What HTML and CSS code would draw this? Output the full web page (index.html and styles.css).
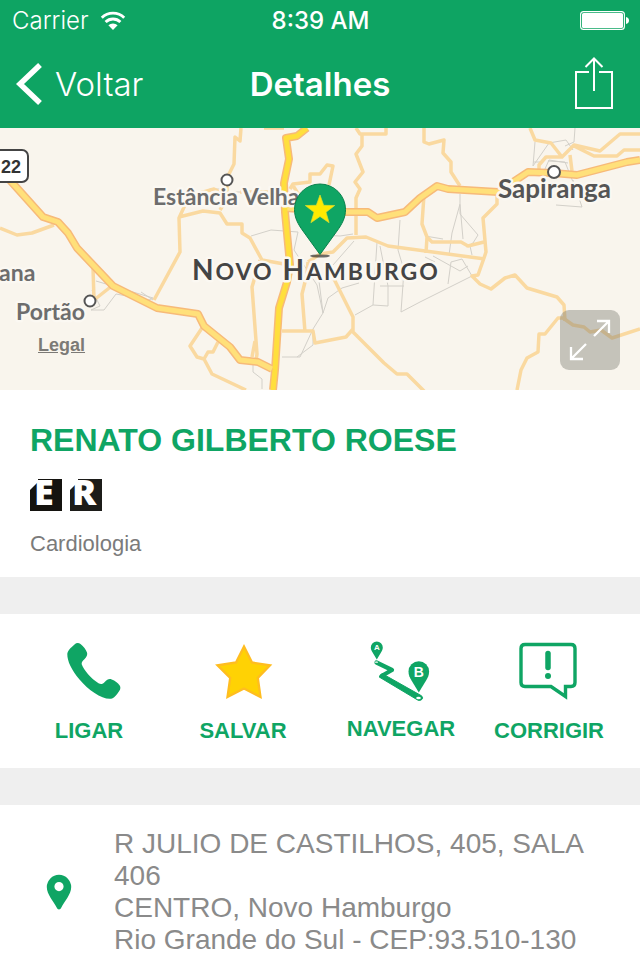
FILE: index.html
```html
<!DOCTYPE html>
<html lang="pt-BR">
<head>
<meta charset="utf-8">
<meta name="viewport" content="width=device-width, initial-scale=1">
<title>Detalhes</title>
<link rel="stylesheet" href="styles.css">
</head>
<body>
<header class="top">
  <div class="status">
    <div class="carrier">
      <span>Carrier</span>
      <svg class="wifi" viewBox="0 0 26 20" aria-hidden="true">
        <path d="M1.8 6.7a16 16 0 0 1 22.4 0M5.6 11a10.6 10.6 0 0 1 14.8 0" fill="none" stroke="#fff" stroke-width="2.9"/>
        <path d="M8.4 14.2a6.8 6.8 0 0 1 9.2 0L13 19z" fill="#fff"/>
      </svg>
    </div>
    <span class="clock">8:39 AM</span>
    <svg class="battery" viewBox="0 0 49 20" aria-hidden="true">
      <rect x=".6" y=".6" width="43.8" height="17.8" rx="3" fill="none" stroke="#fff" stroke-width="1.1"/>
      <rect x="2" y="2" width="41" height="15" rx="1.6" fill="#fff"/>
      <path d="M46 6c2 .3 3 1.700 3 3.500s-1 3.200-3 3.500z" fill="#fff"/>
    </svg>
  </div>
  <nav class="bar">
    <button class="back" type="button">
      <svg viewBox="0 0 26 42" aria-hidden="true"><path d="M24 2 4 21l20 19" fill="none" stroke="#fff" stroke-width="5.500"/></svg>
      <span>Voltar</span>
    </button>
    <h1>Detalhes</h1>
    <button class="share" type="button" aria-label="Compartilhar">
      <svg viewBox="0 0 40 54" aria-hidden="true"><path d="M15 15H2v36h36V15H25M20 34V1.500M11.500 10 20 1.500 28.500 10" fill="none" stroke="#fff" stroke-width="2"/></svg>
    </button>
  </nav>
</header>
<main>
  <section class="map" aria-label="Mapa">
    <svg class="map-art" viewBox="0 128 640 262" preserveAspectRatio="xMidYMid slice">
      <rect y="128" width="640" height="262" fill="#f9f5ed"/>
      <g class="trail">
        <path d="M96 281l57 17-4 2-33-6-12 16H91l9-4-8-16M141 292l12 8"/>
        <path d="M200 195l10-6h14M224 192h20M251 236l20-6 27 2-4 18 23 35 6 28-10 16-13 28h-18"/>
        <path d="M253 362v10l9 7v10M297 357l16-12v-11M323 313l-5-40M323 313l5-15 14-10 17-5M333 265l21-24M355 315l18-10M373 305l4-63M373 305l15 1V286l-8-40M380 286h24M400 220l-2 30 6 20-3 42 19-10"/>
        <path d="M318 235l22 1 13-2M420 302l52-26-10-17-11 3-3 22M433 256l27 15 8-5M425 257l10 5M460 194v20l18 21-5 8-7 4M460 204l-8 29-3 22M460 205l3 34M470 246l2 9M425 236l18 3"/>
        <path d="M535 142l-2 24 16-23 17-3 7 10M575 128l-1 14-9 4M548 161l17 1 8 20M556 205l26 2-9-27M533 162h8M545 169l4-9 19 3"/>
      </g>
      <g class="minor">
        <path d="M0 228l17 7 15-2 22-8M93 268l1 32 19-15M154 300l26-48-1-34 6-13M179 217l24-6 17 2 7 11h15v9l8 5 12 22 22 4"/>
        <path d="M241 128l-1 13-5-4-1 27-7 14v18M200 193l14-4 10 5M240 192h45M264 128h20M220 210l8-13"/>
        <path d="M260 260l-8 27 5 67-1 7M252 357l3-16M202 328l-12 18 7 11 7 2 4-7h5l5-10M204 359l8 15 34 16"/>
        <path d="M290 189l3-5 17-2v-8h10l7-9 6 1-4 19M292 184l5 8 3 4"/>
        <path d="M356 128l4 6h26v-6M362 133v13l-6 8 7 18-8 10 5 7-4 9 0 37"/>
        <path d="M308 262l12-8 13-2 14-14 19-1 22 9 97 13M308 262l-1 12-5 20 3 38M333 277l20 40v15l31 31 13 11 10 0 20 20M282 331h31l2 12 31-6 7-8"/>
        <path d="M424 128v14l5 2 15-4-1 13 8 9v10l9 14M424 195l-2 29 5 13-1 16M428 238l4 4h29l7 4 16-4M484 258l-6 17-6 1 8 8 11 5 14-11 10-3 12 13 30 9 7 8 1 16M484 258l2-6-3-34 14-14v-11M530 128l5 12 16 3 11 14-16 0-7 8v5M562 157l12-12 26 6 20-17h20M574 146l20 10h23l7-6h16M570 155l2 16"/>
        <path d="M563 318l10 7 11 2 6 5 11-2 11 8 28-9M563 318h-5l-13 16h-6l-1 18-11 6-6 12-4 20"/>
      </g>
      <g class="road case"><path d="M8 178l35 39 15 5 10 11 9 15 36 38 44 22 41 6 6 12 26 21 10 13 18 2 14 7"/><path d="M285 208l61 4h22l9 6 28-6 15-14 17-12 11 3 50 3 30-20 25 1 24 2 50-13 13-2"/><path d="M307 128l-10 8-11 2 3 21-5 24 1 29 5 53-3 17-8 26-4 62-2 20"/></g>
      <g class="road fill"><path d="M8 178l35 39 15 5 10 11 9 15 36 38 44 22 41 6 6 12 26 21 10 13 18 2 14 7"/><path d="M285 208l61 4h22l9 6 28-6 15-14 17-12 11 3 50 3 30-20 25 1 24 2 50-13 13-2"/><path class="trunk" d="M307 128l-10 8-11 2 3 21-5 24 1 29 5 53-3 17-8 26-4 62-2 20"/></g>
      <g fill="#fff" stroke="#555" stroke-width="2"><circle cx="227" cy="180" r="5.500"/><circle cx="90" cy="301" r="5.500"/><circle cx="554" cy="172" r="6"/></g>
      <rect x="-20" y="150" width="48" height="32" rx="6" fill="#fff" stroke="#444" stroke-width="2"/>
      <text class="shield" x="1" y="173">22</text>
      <g class="town">
        <text x="153" y="205">Estância Velha</text>
        <text x="-1" y="281">ana</text>
        <text x="16" y="320">Portão</text>
        <text class="dark" x="498" y="198">Sapiranga</text>
      </g>
      <text class="city" x="192" y="280">N<tspan>OVO</tspan> H<tspan>AMBURGO</tspan></text>
      <ellipse cx="320" cy="256" rx="10" ry="1.600" fill="#222" opacity=".65"/>
      <path d="M320 254.500 303 231C298 224 294.500 218 294.500 209.500a25.500 25.500 0 0 1 51 0C345.500 218 342 224 337 231z" fill="#0fa564" stroke="#09814c" stroke-width="1"/>
      <path d="M320 195l3.700 10.300 11 .2-8.700 6.700 3.100 10.500-9.100-6.200-9.100 6.200 3.100-10.500-8.700-6.700 11-.2z" fill="#ffea00" stroke="#d7dc30" stroke-width=".7"/>
    </svg>
    <a class="legal" href="#">Legal</a>
    <button class="expand" type="button" aria-label="Expandir mapa">
      <svg viewBox="0 0 60 60" aria-hidden="true"><path d="M34 26 49 11M37 11h12v12M26 34 11 49M11 37v12h12" fill="none" stroke="#fff" stroke-width="2.300"/></svg>
    </button>
  </section>
  <section class="profile">
    <h2>RENATO GILBERTO ROESE</h2>
    <div class="badges">
      <svg viewBox="0 0 32 32" role="img" aria-label="E"><path d="M8 0h24v32H0V10z" fill="#14130f"/><path d="M8 0v3L0 11V0z" fill="#fff"/><text class="mark" x="4" y="26">E</text></svg>
      <svg viewBox="0 0 32 32" role="img" aria-label="R"><path d="M8 0h24v32H0V10z" fill="#1c1c19"/><path d="M8 0v3L0 11V0z" fill="#fff"/><text class="mark" x="2" y="26">R</text></svg>
    </div>
    <p>Cardiologia</p>
  </section>
  <section class="actions">
    <button type="button">
      <svg viewBox="-3 -1 60 60" aria-hidden="true"><path d="M12.500 2.400C14.300.8 16.600.6 18.500 2c3.200 2.600 5.300 5.400 6.500 8.600.7 2-.2 4.300-2.600 6.700-2 1.900-3 3.300-2.700 4.900 2 5.500 9.500 14.500 16.800 19 2.500 1.300 4.200.9 6.200-1.300 2.500-2.600 4.500-3.500 7-2.500 3.400 1.200 6 3.200 8 6 1 1.600.9 3.400-.3 5.400-2.500 4-5 7-7.300 7.800C41.500 58.500 27 49 17.500 37.500 9.500 28 5.200 19 5.300 12c.1-3.200 3.500-6.400 7.200-9.600z" fill="#0fa564"/></svg>
      <span>LIGAR</span>
    </button>
    <button type="button">
      <svg viewBox="0 -1 60 60" aria-hidden="true"><path d="M31 4.500 39 20.500 57 23.300 44.800 36 47.500 55 31 46.500 14.500 55 17.200 36 4.500 23.300 23 20.500z" fill="#ffd204" stroke="#ffbd20" stroke-width="2.300"/></svg>
      <span>SALVAR</span>
    </button>
    <button type="button" class="navigate">
      <svg viewBox="1 0 60 60" aria-hidden="true"><path d="M6.800 18.500 2.600 11.500C1.500 9.800.8 8.500.8 6.600a6 6 0 0 1 12 0C12.800 8.500 12.100 9.800 11 11.500z" fill="#0fa564"/><text class="pin-a" x="6.800" y="9.400">A</text><path d="M48.800 51.500 41.500 39.500C39.700 36.500 38.500 34 38.500 30.500a10.300 10.300 0 0 1 20.600 0C59.100 34 57.900 36.500 56.100 39.500z" fill="#0fa564"/><text class="pin-b" x="48.800" y="36">B</text><path d="M6.500 21.500 22 29 11.500 35" fill="none" stroke="#0fa564" stroke-width="4.200" stroke-linejoin="round" stroke-linecap="round"/><path d="M9.200 36 12 32.500 51 54.500c3 2 1.500 5-2.500 5z" fill="#0fa564" stroke="#0fa564" stroke-width="1" stroke-linejoin="round"/><ellipse cx="6.500" cy="21.200" rx="1.600" ry=".9" fill="#bde8d3"/><ellipse cx="48.500" cy="57" rx="2.300" ry="1.200" fill="#fff"/></svg>
      <span>NAVEGAR</span>
    </button>
    <button type="button">
      <svg viewBox="1 0 60 60" aria-hidden="true"><path d="M7 3.500h46q4 0 4 4v34q0 4-4 4h-5.500v10L33 45.500H7q-4 0-4-4v-34q0-4 4-4z" fill="none" stroke="#0fa564" stroke-width="3.400"/><path d="M30 12.500v14" stroke="#0fa564" stroke-width="5.500" stroke-linecap="round"/><circle cx="30" cy="35" r="3" fill="#0fa564"/></svg>
      <span>CORRIGIR</span>
    </button>
  </section>
  <section class="address">
    <svg viewBox="0 0 26 36" aria-hidden="true"><path fill-rule="evenodd" d="M13 35.500c-1 0-1.600-.6-2.200-1.700C7.500 27 .8 20.500.8 13a12.200 12.200 0 0 1 24.400 0c0 7.500-6.700 14-10 20.800-.6 1.100-1.200 1.700-2.200 1.700zM13 8a4.600 4.600 0 1 0 0 9.200A4.600 4.600 0 1 0 13 8z" fill="#0fa564"/></svg>
    <address>R JULIO DE CASTILHOS, 405, SALA 406<br>CENTRO, Novo Hamburgo<br>Rio Grande do Sul - CEP:93.510-130</address>
  </section>
</main>
</body>
</html>
```
FILE: styles.css
```css
* { box-sizing: border-box; }
body {
  margin: 0;
  min-height: 100vh;
  display: flex;
  flex-direction: column;
  background: #efefef;
  font-family: "Liberation Sans", Arial, sans-serif;
}
h1, h2, p { margin: 0; }
button {
  padding: 0;
  border: 0;
  background: none;
  color: inherit;
  font: inherit;
  cursor: pointer;
}
svg { display: block; }
.top {
  background: #0ea463;
  color: #fff;
  font-family: Inter, sans-serif;
}
.status, .bar {
  display: grid;
  grid-template-columns: 1fr auto 1fr;
  align-items: center;
}
.status {
  height: 40px;
  padding: 1px 11px 0 12px;
  font-size: 24px;
}
.carrier {
  display: flex;
  align-items: center;
  gap: 11px;
  font-weight: 300;
}
.wifi { width: 26px; height: 20px; }
.clock { font-weight: 500; }
.battery { width: 49px; height: 20px; justify-self: end; }
.bar {
  height: 88px;
  padding: 0 16px;
  font-size: 33px;
}
.back {
  display: flex;
  align-items: center;
  gap: 13px;
  font-weight: 300;
}
.back svg { width: 26px; height: 42px; }
h1 { font-size: 33px; font-weight: 600; }
.share { justify-self: end; margin-right: 10px; }
.share svg { width: 40px; height: 54px; }
main {
  flex: 1;
  display: flex;
  flex-direction: column;
}
.map { position: relative; }
.map-art { width: 100%; }
.trail { fill: none; stroke: #d3d0c9; stroke-width: 1; }
.minor { fill: none; stroke: #fad9a0; stroke-width: 3.5; stroke-linejoin: round; }
.road { fill: none; stroke-linejoin: round; }
.case { stroke: #f7ba79; stroke-width: 8; }
.fill { stroke: #ffe07a; stroke-width: 5; }
.trunk { stroke: #ffdf3d; }
.shield { font: bold 18px "Liberation Sans", sans-serif; fill: #333; }
.town, .city {
  font-family: Lato, sans-serif;
  font-weight: 700;
  paint-order: stroke;
  stroke: #fbf8f2;
  stroke-width: 5;
  stroke-linejoin: round;
}
.town { font-size: 23px; fill: #6d6d6d; }
.town .dark { font-size: 26px; fill: #555; }
.city { font-size: 28px; fill: #444; letter-spacing: 2px; }
.city tspan { font-size: 23px; }
.legal {
  position: absolute;
  left: 38px;
  bottom: 33px;
  color: #7c7a76;
  font: bold 18px/24px "Liberation Sans", sans-serif;
}
.expand {
  position: absolute;
  right: 20px;
  bottom: 20px;
  border-radius: 9px;
  background: rgba(120, 120, 110, 0.4);
}
.expand svg { width: 60px; height: 60px; }
.profile {
  padding: 32px 30px 20px;
  background: #fff;
}
h2 {
  color: #0fa564;
  font-size: 32px;
  line-height: 36px;
}
.badges {
  display: flex;
  gap: 8px;
  margin: 21px 0 20px;
}
.badges svg { width: 32px; height: 32px; overflow: visible; }
.mark { font: 800 36px "Open Sans", sans-serif; fill: #fff; }
.profile p {
  color: #7b7b7b;
  font-size: 22px;
  line-height: 26px;
}
.actions {
  display: grid;
  grid-template-columns: 154fr 154fr 162fr 134fr;
  margin: 37px 0;
  padding: 27px 24px 24px 12px;
  background: #fff;
  color: #0fa564;
}
.actions button {
  display: flex;
  flex-direction: column;
  align-items: center;
  gap: 17px;
  font-size: 22px;
  font-weight: 700;
  line-height: 26px;
}
.actions svg { width: 60px; height: 60px; overflow: visible; }
.actions .navigate { gap: 15px; }
.pin-a, .pin-b {
  font-family: "Liberation Sans", sans-serif;
  font-weight: 700;
  fill: #fff;
  text-anchor: middle;
}
.pin-a { font-size: 8px; }
.pin-b { font-size: 14px; }
.address {
  flex: 1;
  display: flex;
  align-items: center;
  gap: 42px;
  padding: 23px 46px 4px;
  background: #fff;
}
.address svg { flex: none; width: 26px; height: 36px; }
address {
  color: #8a8a8a;
  font-size: 28px;
  font-style: normal;
  line-height: 32px;
}
```
